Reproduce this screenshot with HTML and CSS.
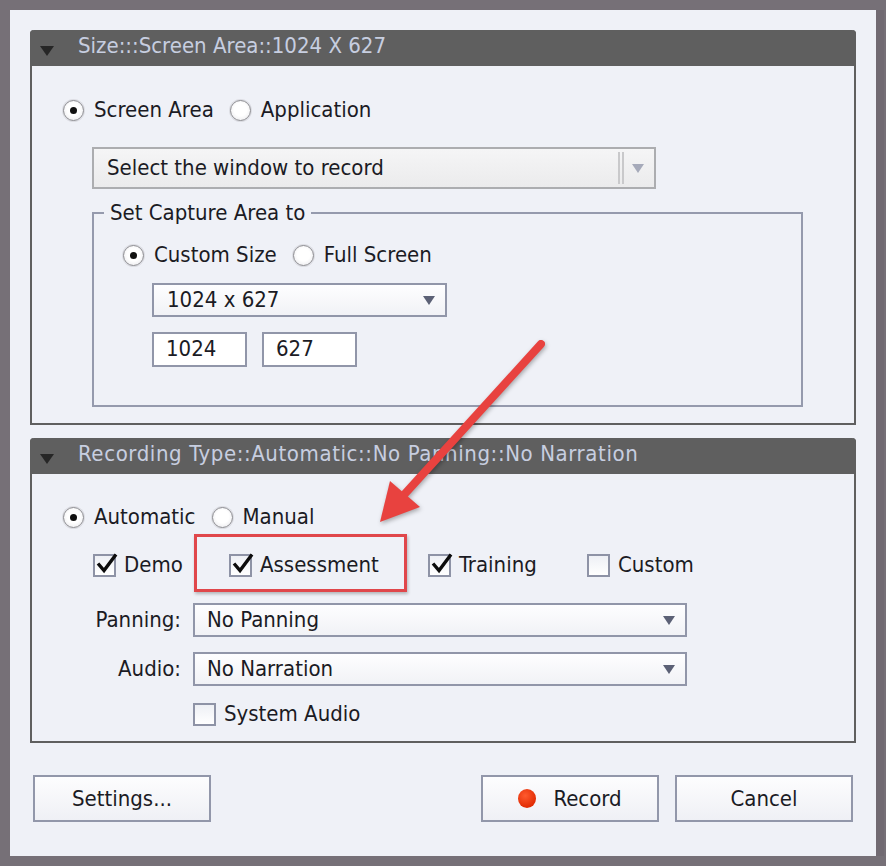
FILE: index.html
```html
<!DOCTYPE html>
<html>
<head>
<meta charset="utf-8">
<link rel="stylesheet" href="styles.css">
</head>
<body>
<div class="dialog">
  <section class="panel">
    <div class="panel-head"><span class="caret"></span><span class="title">Size:::Screen Area::1024 X 627</span></div>
    <div class="panel-body body-size">
      <div class="radio-row">
        <span class="opt"><span class="radio on"></span>Screen Area</span>
        <span class="opt"><span class="radio"></span>Application</span>
      </div>
      <div class="combo combo-disabled combo-window">
        <span class="combo-text">Select the window to record</span>
        <span class="sep"></span>
        <span class="arrow arrow-light"></span>
      </div>
      <fieldset class="capture">
        <legend>Set Capture Area to</legend>
        <div class="radio-row">
          <span class="opt"><span class="radio on"></span>Custom Size</span>
          <span class="opt"><span class="radio"></span>Full Screen</span>
        </div>
        <div class="combo combo-size">
          <span class="combo-text">1024 x 627</span>
          <span class="arrow"></span>
        </div>
        <div class="inputs">
          <div class="field">1024</div>
          <div class="field">627</div>
        </div>
      </fieldset>
    </div>
  </section>

  <section class="panel panel-rec">
    <div class="panel-head"><span class="caret"></span><span class="title title-wide">Recording Type::Automatic::No Panning::No Narration</span></div>
    <div class="panel-body body-rec">
      <div class="radio-row">
        <span class="opt"><span class="radio on"></span>Automatic</span>
        <span class="opt"><span class="radio"></span>Manual</span>
      </div>
      <div class="check-row">
        <span class="chk-item w-demo"><span class="check on"><svg viewBox="0 0 19 19" width="19" height="19"><polyline points="3,7.5 9,14.5 21,-1.5" /></svg></span>Demo</span>
        <span class="chk-item w-assess"><span class="check on"><svg viewBox="0 0 19 19" width="19" height="19"><polyline points="3,7.5 9,14.5 21,-1.5" /></svg></span>Assessment</span>
        <span class="chk-item w-train"><span class="check on"><svg viewBox="0 0 19 19" width="19" height="19"><polyline points="3,7.5 9,14.5 21,-1.5" /></svg></span>Training</span>
        <span class="chk-item"><span class="check"></span>Custom</span>
      </div>
      <div class="form-row row-panning">
        <span class="form-label">Panning:</span>
        <div class="combo combo-long">
          <span class="combo-text">No Panning</span>
          <span class="arrow"></span>
        </div>
      </div>
      <div class="form-row row-audio">
        <span class="form-label">Audio:</span>
        <div class="combo combo-long">
          <span class="combo-text">No Narration</span>
          <span class="arrow"></span>
        </div>
      </div>
      <div class="sys-audio">
        <span class="chk-item"><span class="check"></span>System Audio</span>
      </div>
    </div>
  </section>

  <div class="buttons">
    <div class="btn">Settings...</div>
    <div class="btn-group">
      <div class="btn"><span class="rec-dot"></span>Record</div>
      <div class="btn">Cancel</div>
    </div>
  </div>

  <div class="highlight"></div>
</div>

<svg class="annot-arrow" width="886" height="866" viewBox="0 0 886 866">
  <line x1="541" y1="344" x2="402" y2="497" stroke="#e8423f" stroke-width="8" stroke-linecap="round"/>
  <polygon points="380,522 390,481 420,507" fill="#e8423f"/>
</svg>
</body>
</html>
```

FILE: styles.css
```css
html, body {
  margin: 0;
  padding: 0;
}

body {
  width: 886px;
  height: 866px;
  background: #767077;
  position: relative;
  overflow: hidden;
  font-family: "DejaVu Sans Condensed", "DejaVu Sans", sans-serif;
  font-stretch: semi-condensed;
  font-size: 22px;
  line-height: 24px;
  color: #1b1b24;
}

.dialog {
  position: relative;
  margin: 10px 0 0 10px;
  width: 866px;
  height: 846px;
  box-sizing: border-box;
  padding: 20px 20px 0 20px;
  background: #eff1f7;
  box-shadow: 8px 0 0 #716a72;
}

.panel {
  border: 2px solid #5f5f5f;
  border-top: 0;
  border-radius: 4px 4px 0 0;
}

.panel-rec {
  margin-top: 13px;
}

.panel-head {
  height: 36px;
  margin: 0 -2px;
  background: #5f5f5f;
  border-radius: 4px 4px 0 0;
  display: flex;
  align-items: flex-start;
  box-sizing: border-box;
  padding: 4px 0 0 10px;
}

.caret {
  width: 0;
  height: 0;
  margin-top: 12px;
  border-left: 7px solid transparent;
  border-right: 7px solid transparent;
  border-top: 10px solid #262626;
}

.title {
  margin-left: 24px;
  color: #c7cee0;
}

.title-wide {
  letter-spacing: 0.6px;
}

.body-size {
  padding: 32px 0 16px 30px;
}

.body-rec {
  padding: 31px 0 15px 30px;
}

.radio-row {
  display: flex;
  align-items: center;
  height: 24px;
  gap: 15px;
}

.opt {
  display: flex;
  align-items: center;
  gap: 9px;
}

.radio {
  position: relative;
  width: 21px;
  height: 21px;
  margin: 1px;
  box-sizing: border-box;
  border-radius: 50%;
  border: 1px solid #8c8c90;
  background: radial-gradient(circle at 50% 45%, #ffffff 45%, #e4e4e8 100%);
  box-shadow: 0 0 0 1px #dcdde3;
}

.radio.on::after {
  content: "";
  position: absolute;
  left: 6px;
  top: 6px;
  width: 7px;
  height: 7px;
  border-radius: 50%;
  background: #111;
}

.combo {
  display: flex;
  align-items: center;
  box-sizing: border-box;
  border: 2px solid #9196a9;
  background: linear-gradient(#fefeff, #f1f2f6);
}

.combo-text {
  flex: 1;
}

.combo-window {
  margin: 25px 0 0 30px;
  width: 564px;
  height: 42px;
  padding-left: 13px;
  border-color: #acadb0;
  background: linear-gradient(#f5f5f6, #ebebec);
}

.sep {
  width: 2px;
  height: 32px;
  border-left: 2px solid #c9c9cb;
  border-right: 2px solid #c9c9cb;
  margin-right: 8px;
}

.arrow {
  width: 0;
  height: 0;
  margin-right: 10px;
  border-left: 6px solid transparent;
  border-right: 6px solid transparent;
  border-top: 9px solid #5c6176;
}

.arrow-light {
  border-top-color: #a6aaba;
}

.capture {
  margin: 12px 0 0 30px;
  width: 711px;
  box-sizing: border-box;
  min-width: 0;
  padding: 18px 0 38px 28px;
  border: 2px solid #959aad;
}

.capture legend {
  margin-left: -18px;
  padding: 0 6px;
  line-height: 24px;
}

.combo-size {
  margin: 16px 0 0 30px;
  width: 295px;
  height: 34px;
  padding-left: 13px;
}

.inputs {
  display: flex;
  gap: 15px;
  margin: 15px 0 0 30px;
}

.field {
  width: 95px;
  height: 35px;
  box-sizing: border-box;
  border: 2px solid #9196a9;
  background: #ffffff;
  padding: 3px 0 0 12px;
}

.check-row {
  display: flex;
  align-items: center;
  height: 24px;
  margin: 24px 0 0 31px;
}

.chk-item {
  display: flex;
  align-items: center;
  gap: 8px;
}

.w-demo { width: 136px; }
.w-assess { width: 199px; }
.w-train { width: 159px; }

.check {
  width: 23px;
  height: 23px;
  box-sizing: border-box;
  border: 2px solid #8e93a6;
  background: linear-gradient(#eef0f5, #ffffff);
  display: flex;
  align-items: center;
  justify-content: center;
}

.check svg {
  overflow: visible;
}

.check polyline {
  fill: none;
  stroke: #0c0c0c;
  stroke-width: 3.4;
  stroke-linejoin: miter;
}

.form-row {
  display: flex;
  align-items: center;
}

.row-panning {
  margin-top: 26px;
}

.row-audio {
  margin-top: 15px;
}

.form-label {
  width: 149px;
  margin-left: -30px;
  text-align: right;
  margin-right: 12px;
}

.combo-long {
  width: 494px;
  height: 34px;
  padding-left: 12px;
}

.sys-audio {
  margin: 16px 0 0 131px;
  height: 24px;
  display: flex;
  align-items: center;
}

.buttons {
  display: flex;
  justify-content: space-between;
  margin-top: 32px;
  padding: 0 3px;
}

.btn-group {
  display: flex;
  gap: 16px;
}

.btn {
  width: 178px;
  height: 47px;
  box-sizing: border-box;
  border: 2px solid #9297aa;
  background: linear-gradient(#fdfdfe, #eff0f5);
  display: flex;
  align-items: center;
  justify-content: center;
}

.rec-dot {
  width: 18px;
  height: 19px;
  border-radius: 50%;
  margin-right: 17px;
  background: radial-gradient(circle at 40% 35%, #ff5a2e, #e22d05 70%);
}

.highlight {
  position: absolute;
  left: 184px;
  top: 524px;
  width: 213px;
  height: 58px;
  box-sizing: border-box;
  border: 3px solid #e0474b;
  box-shadow: 1px 2px 3px rgba(0, 0, 0, 0.25);
}

.annot-arrow {
  position: absolute;
  left: 0;
  top: 0;
  pointer-events: none;
  filter: drop-shadow(1px 2px 2px rgba(0, 0, 0, 0.3));
}
```
